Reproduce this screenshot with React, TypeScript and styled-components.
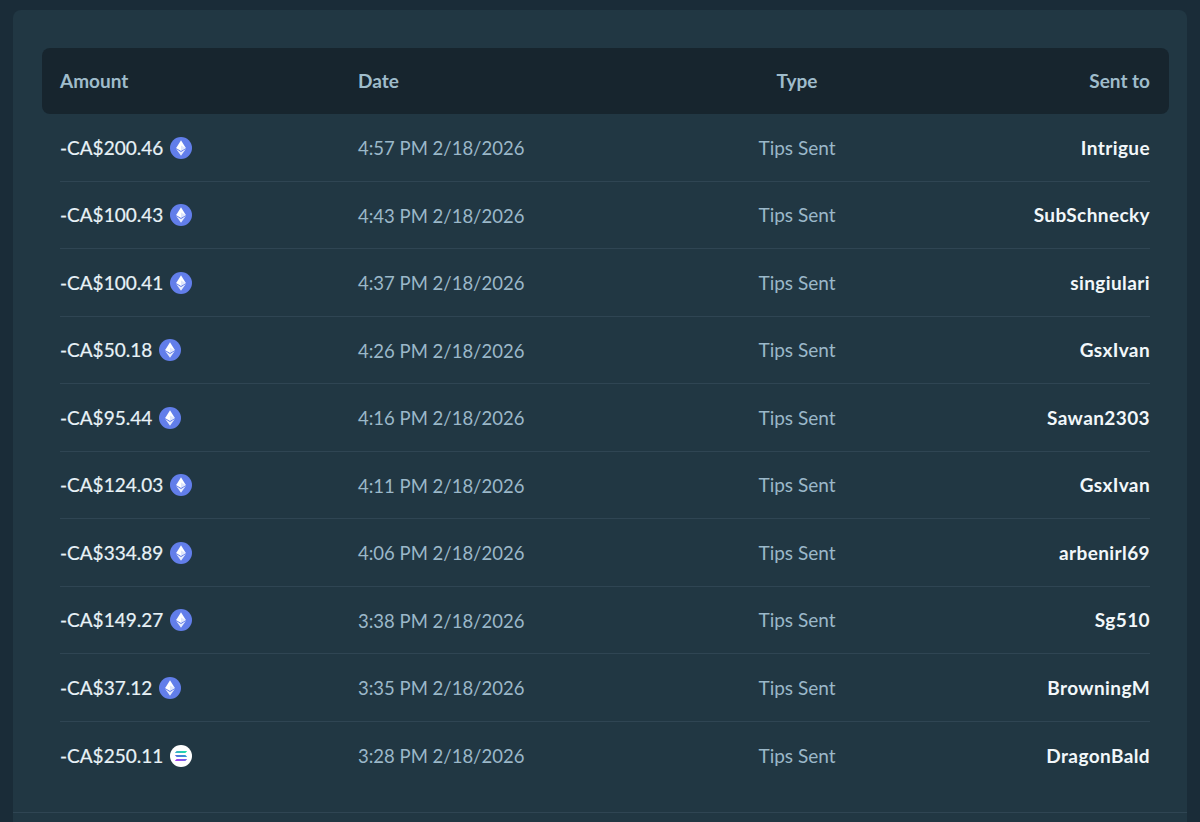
import React from "react";
import styled, { createGlobalStyle } from "styled-components";

const GlobalStyle = createGlobalStyle`
  html, body {
    margin: 0;
    height: 100%;
    overflow: hidden;
    background: #1a2c38;
    font-family: "Lato", "Noto Sans", sans-serif;
  }
`;

const Page = styled.div`
  height: 822px;
  padding: 10px 13px 0;
  box-sizing: border-box;
  overflow: hidden;
`;

const Panel = styled.section`
  height: 812px;
  box-sizing: border-box;
  padding: 38px 18px 0 29px;
  background: #213743;
  border-radius: 8px 8px 0 0;
`;

const Columns = `
  display: grid;
  grid-template-columns: 298px 300px 278px 1fr;
  align-items: center;
`;

const HeaderRow = styled.div`
  ${Columns}
  height: 66px;
  box-sizing: border-box;
  padding: 0 19px 2px 18px;
  background: #17252e;
  border-radius: 8px;
  color: #9fbccb;
  font-size: 19px;
  font-weight: 700;
`;

const Rows = styled.div`
  padding: 0 19px 0 18px;
`;

const Row = styled.div`
  ${Columns}
  height: 67.5px;
  box-sizing: border-box;
  border-bottom: 1px solid #2f4553;
  font-size: 19px;

  &:last-child {
    border-bottom: none;
  }
`;

const Amount = styled.div`
  display: flex;
  align-items: center;
  gap: 7px;
  color: #e8f2f7;
  -webkit-text-stroke: 0.2px #e8f2f7;
`;

const CoinSlot = styled.span`
  display: flex;
  flex: none;
  margin-top: 1px;
`;

const Muted = styled.div<{ $center?: boolean; $date?: boolean }>`
  color: #9bb8c9;
  font-size: ${({ $date }) => ($date ? "18.5px" : "19px")};
  padding-top: ${({ $date }) => ($date ? "2px" : "0")};
  text-align: ${({ $center }) => ($center ? "center" : "left")};
`;

const HeadCell = styled.div<{ $align?: string }>`
  text-align: ${({ $align }) => $align ?? "left"};
`;

const Recipient = styled.div`
  color: #f2f7fa;
  font-weight: 700;
  letter-spacing: 0.4px;
  text-align: right;
`;

const FooterRule = styled.div`
  height: 1px;
  margin-top: 23px;
  margin-left: -29px;
  margin-right: -18px;
  background: #2f4553;
`;

const EthIcon = () => (
  <svg width="22" height="22" viewBox="0 0 22 22" aria-hidden="true">
    <circle cx="11" cy="11" r="11" fill="#627eea" />
    <path d="M11 3.2 6.2 11 11 13.8 15.8 11Z" fill="#fff" />
    <path d="M11 14.9 6.2 12.1 11 18.8 15.8 12.1Z" fill="#fff" fillOpacity=".85" />
    <path d="M11 8.6 6.2 11 11 13.8Z" fill="#fff" fillOpacity=".8" />
    <path d="M11 8.6 15.8 11 11 13.8Z" fill="#dfe5fb" />
  </svg>
);

const SolIcon = () => (
  <svg width="22" height="22" viewBox="0 0 22 22" aria-hidden="true">
    <defs>
      <linearGradient id="solTop" x1="0" y1="0" x2="1" y2="0">
        <stop offset="0" stopColor="#3ea6c8" />
        <stop offset="1" stopColor="#19e6a8" />
      </linearGradient>
      <linearGradient id="solMid" x1="0" y1="0" x2="1" y2="0">
        <stop offset="0" stopColor="#5a6fe0" />
        <stop offset="1" stopColor="#2f9ad0" />
      </linearGradient>
      <linearGradient id="solBot" x1="0" y1="0" x2="1" y2="0">
        <stop offset="0" stopColor="#a63cf0" />
        <stop offset="1" stopColor="#6a6ae6" />
      </linearGradient>
    </defs>
    <circle cx="11" cy="11" r="11" fill="#fff" />
    <path d="M6.6 6.1H17.2L15.4 8.1H4.8Z" fill="url(#solTop)" />
    <path d="M4.8 10H15.4L17.2 12H6.6Z" fill="url(#solMid)" />
    <path d="M6.6 13.9H17.2L15.4 15.9H4.8Z" fill="url(#solBot)" />
  </svg>
);

type Tip = { amount: string; date: string; to: string; coin: "eth" | "sol" };

const tips: Tip[] = [
  { amount: "-CA$200.46", date: "4:57 PM 2/18/2026", to: "Intrigue", coin: "eth" },
  { amount: "-CA$100.43", date: "4:43 PM 2/18/2026", to: "SubSchnecky", coin: "eth" },
  { amount: "-CA$100.41", date: "4:37 PM 2/18/2026", to: "singiulari", coin: "eth" },
  { amount: "-CA$50.18", date: "4:26 PM 2/18/2026", to: "GsxIvan", coin: "eth" },
  { amount: "-CA$95.44", date: "4:16 PM 2/18/2026", to: "Sawan2303", coin: "eth" },
  { amount: "-CA$124.03", date: "4:11 PM 2/18/2026", to: "GsxIvan", coin: "eth" },
  { amount: "-CA$334.89", date: "4:06 PM 2/18/2026", to: "arbenirl69", coin: "eth" },
  { amount: "-CA$149.27", date: "3:38 PM 2/18/2026", to: "Sg510", coin: "eth" },
  { amount: "-CA$37.12", date: "3:35 PM 2/18/2026", to: "BrowningM", coin: "eth" },
  { amount: "-CA$250.11", date: "3:28 PM 2/18/2026", to: "DragonBald", coin: "sol" },
];

export default function App() {
  return (
    <Page>
      <GlobalStyle />
      <Panel>
        <HeaderRow>
          <HeadCell>Amount</HeadCell>
          <HeadCell>Date</HeadCell>
          <HeadCell $align="center">Type</HeadCell>
          <HeadCell $align="right">Sent to</HeadCell>
        </HeaderRow>
        <Rows>
          {tips.map((t) => (
            <Row key={t.date}>
              <Amount>
                {t.amount}
                <CoinSlot>{t.coin === "eth" ? <EthIcon /> : <SolIcon />}</CoinSlot>
              </Amount>
              <Muted $date>{t.date}</Muted>
              <Muted $center>Tips Sent</Muted>
              <Recipient>{t.to}</Recipient>
            </Row>
          ))}
        </Rows>
        <FooterRule />
      </Panel>
    </Page>
  );
}
